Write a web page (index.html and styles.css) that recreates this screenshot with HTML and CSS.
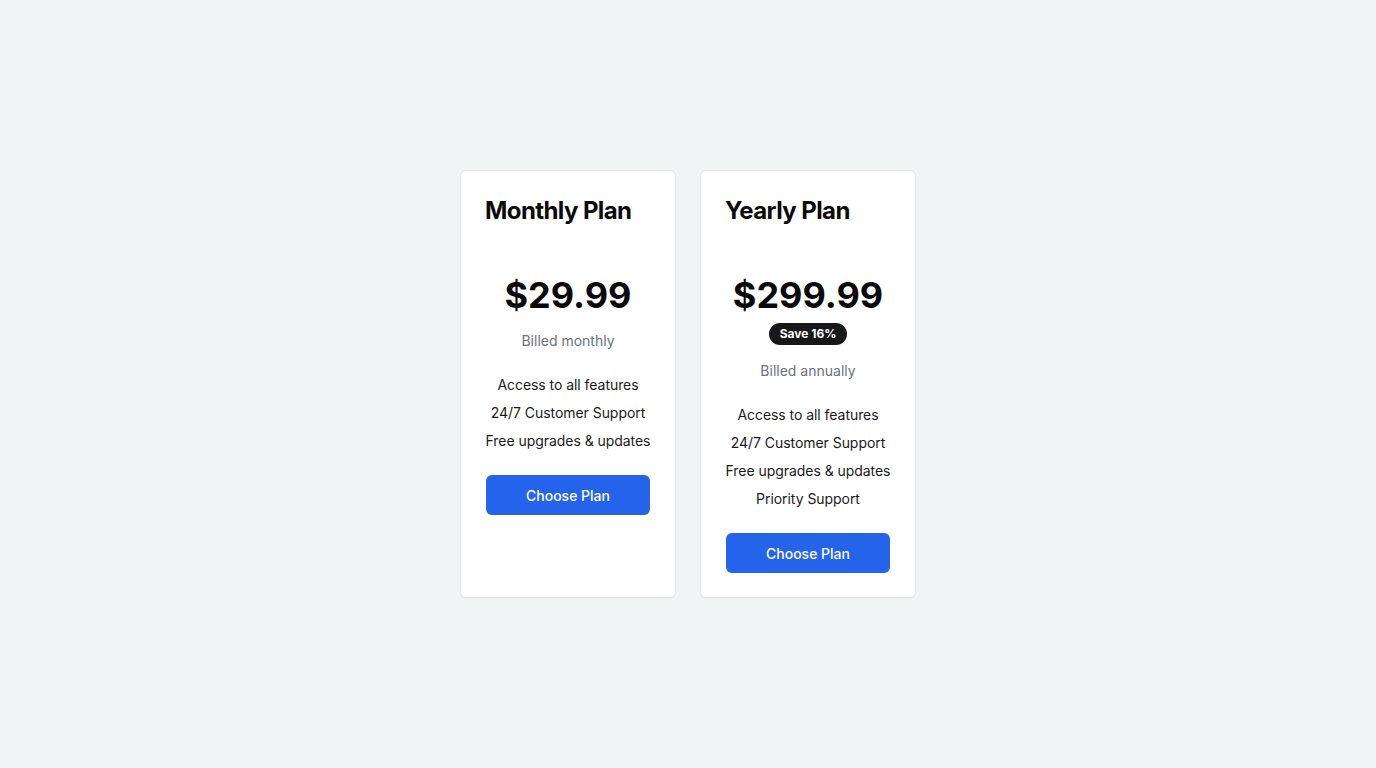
FILE: index.html
```html
<!DOCTYPE html>
<html lang="en">
<head>
<meta charset="utf-8">
<title>Pricing</title>
<link rel="stylesheet" href="styles.css">
</head>
<body>
<main class="plans">
  <section class="card">
    <h2 class="title">Monthly Plan</h2>
    <div class="body">
      <div class="price">$29.99</div>
      <p class="billed">Billed monthly</p>
      <ul class="features">
        <li>Access to all features</li>
        <li>24/7 Customer Support</li>
        <li>Free upgrades &amp; updates</li>
      </ul>
      <button class="btn">Choose Plan</button>
    </div>
  </section>
  <section class="card">
    <h2 class="title">Yearly Plan</h2>
    <div class="body">
      <div class="price">$299.99</div>
      <span class="badge">Save 16%</span>
      <p class="billed">Billed annually</p>
      <ul class="features">
        <li>Access to all features</li>
        <li>24/7 Customer Support</li>
        <li>Free upgrades &amp; updates</li>
        <li>Priority Support</li>
      </ul>
      <button class="btn">Choose Plan</button>
    </div>
  </section>
</main>
</body>
</html>
```
FILE: styles.css
```css
* { box-sizing: border-box; }
html, body { margin: 0; padding: 0; }
body {
  background: #f3f4f6;
  font-family: Inter, "Noto Sans", sans-serif;
  color: #0a0a0a;
  min-height: 100vh;
  display: flex;
  align-items: center;
  justify-content: center;
}
.plans {
  display: flex;
  gap: 24px;
  align-items: stretch;
}
.card {
  width: 216px;
  background: #fff;
  border: 1px solid #e5e7eb;
  border-radius: 6px;
  box-shadow: 0 1px 2px rgba(0,0,0,0.05);
  padding: 24px;
  display: flex;
  flex-direction: column;
}
.title {
  margin: 0;
  font-size: 24px;
  line-height: 32px;
  font-weight: 700;
  letter-spacing: -0.6px;
  color: #0a0a0a;
  white-space: nowrap;
}
.body {
  margin-top: 48px;
  display: flex;
  flex-direction: column;
  align-items: center;
  text-align: center;
}
.price {
  font-size: 36px;
  line-height: 40px;
  font-weight: 700;
  color: #0a0a0a;
}
.badge {
  margin-top: 8px;
  background: #18181b;
  color: #fff;
  font-size: 12px;
  font-weight: 700;
  line-height: 16px;
  padding: 3px 11px;
  border-radius: 999px;
}
.billed {
  margin: 16px 0 0;
  font-size: 14px;
  line-height: 20px;
  color: #6b7280;
}
.features {
  list-style: none;
  margin: 24px -4px 0;
  padding: 0;
  display: flex;
  flex-direction: column;
  gap: 8px;
  font-size: 14px;
  line-height: 20px;
  color: #1a1a1a;
  white-space: nowrap;
  letter-spacing: -0.05px;
}
.btn {
  margin-top: 24px;
  width: 164px;
  height: 40px;
  border: none;
  border-radius: 6px;
  background: #2563eb;
  color: #fff;
  font-family: inherit;
  font-size: 14px;
  font-weight: 500;
}
```
